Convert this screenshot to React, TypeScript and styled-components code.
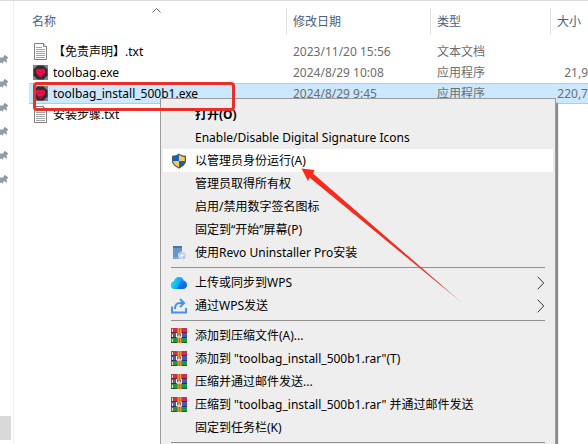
import React from "react";
import styled, { createGlobalStyle } from "styled-components";

const GlobalStyle = createGlobalStyle`
  *, *::before, *::after { box-sizing: border-box; }
  body { margin: 0; background: #fff; overflow: hidden; }
  body, button { font-family: "Noto Sans", "Noto Sans CJK SC", sans-serif; font-size: 12px; }
`;

const Explorer = styled.div`
  position: relative;
  display: flex;
  height: 100vh;
  border-top: 1px solid #d9d9d9;
  overflow: hidden;
  line-height: 20px;
`;

const Sidebar = styled.nav`
  display: flex;
  flex-direction: column;
  flex: none;
  width: 14px;
  padding: 46px 2px 4px 0;
  border-right: 1px solid #f0f0f0;
`;

const PinnedItem = styled.div`
  display: flex;
  align-items: center;
  height: 24px;
`;

const CurrentItem = styled.div`
  height: 24px;
  margin-top: auto;
  background: #d9d9d9;
`;

const FilePane = styled.main`
  flex: 1;
  min-width: 0;
  padding: 7px 0 0 15px;
`;

const FileTable = styled.table`
  width: 100%;
  table-layout: fixed;
  border-collapse: separate;
  border-spacing: 0;
`;

const HeaderCell = styled.th<{ $width?: number; $first?: boolean }>`
  position: relative;
  width: ${(p) => (p.$width ? `${p.$width}px` : "auto")};
  height: 27px;
  padding: 0 0 0 ${(p) => (p.$first ? 3 : 6)}px;
  border-left: ${(p) => (p.$first ? "0" : "1px solid #e2e2e2")};
  text-align: left;
  white-space: nowrap;
`;

const SortButton = styled.button`
  display: block;
  padding: 0;
  border: 0;
  background: none;
  color: #4c607a;
  line-height: 26px;
`;

const SortMark = styled.svg`
  position: absolute;
  top: 0;
  left: 50%;
  width: 9px;
  height: 5px;
  transform: translateX(-6px);
`;

const FileBody = styled.tbody`
  &::before { content: ""; display: block; height: 6px; }
`;

const FileRow = styled.tr<{ $selected?: boolean }>`
  td {
    background: ${(p) => (p.$selected ? "#cce8ff" : "transparent")};
    box-shadow: ${(p) => (p.$selected ? "inset 0 1px #99d1ff, inset 0 -1px #99d1ff" : "none")};
  }
`;

const Cell = styled.td<{ $right?: boolean }>`
  height: 21px;
  padding: 0 0 0 ${(p) => (p.$right ? 0 : 7)}px;
  color: #6d6d6d;
  text-align: ${(p) => (p.$right ? "right" : "left")};
  white-space: nowrap;
`;

const NameCell = styled(Cell)`
  padding-left: 3px;
  color: #000;
`;

const FileName = styled.span`
  display: flex;
  align-items: center;
  gap: 4px;
  svg { flex: none; }
`;

const Menu = styled.ul`
  position: absolute;
  top: 97px;
  left: 160px;
  width: 396px;
  margin: 0;
  padding: 4px 2px;
  list-style: none;
  background: #eee;
  border: 1px solid #9b9b9b;
  box-shadow: 2px 5px 1px #8c8c8c;
`;

const MenuButton = styled.button<{ $active?: boolean; $strong?: boolean }>`
  display: grid;
  grid-template-columns: 16px 1fr 8px;
  column-gap: 8px;
  align-items: center;
  width: 100%;
  height: 23px;
  padding: 0 8px;
  border: 0;
  background: ${(p) => (p.$active ? "#fff" : "transparent")};
  color: #000;
  font-weight: ${(p) => (p.$strong ? 700 : 400)};
  line-height: 20px;
  text-align: left;
  white-space: nowrap;
`;

const MenuIcon = styled.span`
  display: flex;
`;

const Separator = styled.li`
  height: 7px;
  padding: 3px 8px;
  &::before { content: ""; display: block; height: 1px; background: #919191; }
`;

const Highlight = styled.div`
  position: absolute;
  top: 81px;
  left: 33px;
  width: 202px;
  height: 29px;
  border: 3px solid #e8302a;
  border-radius: 4px;
`;

const Arrow = styled.svg`
  position: absolute;
  top: 165px;
  left: 300px;
  width: 166px;
  height: 140px;
`;

const PinIcon = () => (
  <svg width="9" height="11" viewBox="0 0 9 11" aria-hidden="true">
    <path d="M0 3.5h3L4.5 1.2 8 3.8 6.4 6l1 2.5-1.7-.2-1.8-1.2L2.5 10 2 8.5 0 9z" fill="#929ea6" />
    <path d="M4.5 1.2 8 3.8" stroke="#8a969e" />
  </svg>
);

const TextIcon = () => (
  <svg width="17" height="17" viewBox="0 0 17 17" aria-hidden="true">
    <path d="M2.5.5h9l3 3v13h-12z" fill="#fff" stroke="#7f7f7f" />
    <path d="M11.5.5v3h3" fill="#eee" stroke="#7f7f7f" />
    <path d="M4 4.5h6M4 6.5h9M4 8.5h9M4 10.5h9M4 12.5h9M4 14.5h9" stroke="#a3a3a3" />
  </svg>
);

const ToolbagIcon = () => (
  <svg width="17" height="17" viewBox="0 0 17 17" aria-hidden="true">
    <path d="M1 1h15v15H1z" fill="#858585" />
    <path d="M5.5 1.5h6l4 4v6l-4 4h-6l-4-4v-6z" fill="#332d31" />
    <path d="M8.5 13.5 6.3 11.5 4 8.5V6L6 4.5l1.5.7h2l1.500-.7L13 6v2.5l-2.300 3z" fill="#f20d4d" />
    <path d="m5.5 7 2 1v1.5zM11.5 7l-2 1v1.5zM7.5 11h2v1h-2z" fill="#7d1431" />
  </svg>
);

const ShieldIcon = () => (
  <svg width="16" height="16" viewBox="0 0 16 16" aria-hidden="true">
    <path d="M8 .5C6 2 3.8 2.7 1 2.8V8c0 3.600 4 6.200 7 7.700 3-1.500 7-4.100 7-7.700V2.800C12.200 2.700 10 2 8 .5z" fill="#50565b" />
    <path d="M8 1.700V8H2.200V3.900C4.500 3.700 6.500 2.800 8 1.700z" fill="#0e65bd" />
    <path d="M8 1.700V8h5.800V3.900C11.500 3.700 9.500 2.800 8 1.700z" fill="#ffc84a" />
    <path d="M8 8v6.300C5 12.800 2.200 10.900 2.200 8z" fill="#ffc84a" />
    <path d="M8 8v6.300c3-1.500 5.800-3.400 5.800-6.300z" fill="#0e65bd" />
  </svg>
);

const RevoIcon = () => (
  <svg width="16" height="16" viewBox="0 0 16 16" aria-hidden="true">
    <path d="M2 1h9v13H2z" fill="#6b95c9" />
    <path d="M2 1h9v2H2z" fill="#4576ad" />
    <path d="M2 12h6v2H2z" fill="#82a6d2" />
    <circle cx="11" cy="10.5" r="4" fill="#c9d8ea" />
    <path d="M11 10.5 8 8l2-1.300zM11 10.5l3.500 1.800-1.700 1.700z" fill="#a6bede" />
    <circle cx="11" cy="10.5" r="1.2" fill="#fff" />
  </svg>
);

const CloudIcon = () => (
  <svg width="16" height="16" viewBox="0 0 16 16" aria-hidden="true">
    <defs>
      <linearGradient id="cloudLeft" x1="0" y1="0.3" x2="1" y2="0.7">
        <stop offset="0" stopColor="#20e4f0" />
        <stop offset="1" stopColor="#0a86f2" />
      </linearGradient>
      <linearGradient id="cloudRight" x1="0" y1="0" x2="1" y2="1">
        <stop offset="0" stopColor="#18b4fa" />
        <stop offset="1" stopColor="#1257d9" />
      </linearGradient>
    </defs>
    <path d="M4 14c-2.400 0-4-1.500-4-3.800C0 8 1.400 6.500 3.300 6.300 3.700 3.800 5.500 2 8 2c2.300 0 4 1.400 4.500 3.500C14.600 5.900 16 7.500 16 9.700 16 12.300 14.400 14 12 14z" fill="url(#cloudRight)" />
    <path d="M4 14c-2.400 0-4-1.500-4-3.800C0 8 1.400 6.500 3.300 6.300 3.700 3.800 5.500 2 8 2c2.300 0 4 1.400 4.500 3.500-3 0-3.800 2-4.500 4.200C7.300 12.300 6.500 14 4 14z" fill="url(#cloudLeft)" />
  </svg>
);

const ShareIcon = () => (
  <svg width="16" height="16" viewBox="0 0 16 16" fill="none" stroke="#4a90e8" strokeWidth="2" aria-hidden="true">
    <path d="M1 8.500v6h14V10" />
    <path d="M4 11c0-4 1.500-6 5-6h3" />
    <path d="m9 1 4 4-4 4" />
  </svg>
);

const RarIcon = () => (
  <svg width="16" height="16" viewBox="0 0 16 16" aria-hidden="true">
    <path d="M0 0h16v5H0z" fill="#c8304f" />
    <path d="M0 5h16v5H0z" fill="#4657b8" />
    <path d="M0 10h16v5H0z" fill="#1c9a3f" />
    <path d="M0 4h16v1H0z" fill="#791733" />
    <path d="M0 9h16v1H0z" fill="#252d74" />
    <path d="M0 14h16v1H0z" fill="#105b27" />
    <path d="M1 1h1v3H1zM1 6h1v3H1zM1 11h1v3H1z" fill="#e9da9f" />
    <path d="M6 0h5v15H6z" fill="#d9601c" />
    <path d="M7 0h1v15H7zM9 0h1v15H9z" fill="#ef903c" />
    <path d="M5 6h6v3H5z" fill="#a85a48" />
    <path d="M5.500 5v4h5V5M8 6.500V9" fill="none" stroke="#fff" />
  </svg>
);

const Chevron = () => (
  <svg width="8" height="14" viewBox="0 0 8 14" aria-hidden="true">
    <path d="m.7.7 6 6.300-6 6.300" fill="none" stroke="#32324a" />
  </svg>
);

type MenuEntry = {
  text: string;
  icon?: React.ReactNode;
  active?: boolean;
  strong?: boolean;
  submenu?: boolean;
};

const menuGroups: MenuEntry[][] = [
  [
    { text: "打开(O)", strong: true },
    { text: "Enable/Disable Digital Signature Icons" },
    { text: "以管理员身份运行(A)", icon: <ShieldIcon />, active: true },
    { text: "管理员取得所有权" },
    { text: "启用/禁用数字签名图标" },
    { text: "固定到“开始”屏幕(P)" },
    { text: "使用Revo Uninstaller Pro安装", icon: <RevoIcon /> },
  ],
  [
    { text: "上传或同步到WPS", icon: <CloudIcon />, submenu: true },
    { text: "通过WPS发送", icon: <ShareIcon />, submenu: true },
  ],
  [
    { text: "添加到压缩文件(A)...", icon: <RarIcon /> },
    { text: '添加到 "toolbag_install_500b1.rar"(T)', icon: <RarIcon /> },
    { text: "压缩并通过邮件发送...", icon: <RarIcon /> },
    { text: '压缩到 "toolbag_install_500b1.rar" 并通过邮件发送', icon: <RarIcon /> },
    { text: "固定到任务栏(K)" },
  ],
  [],
];

const files = [
  { name: "【免责声明】.txt", date: "2023/11/20 15:56", type: "文本文档", size: "", icon: <TextIcon /> },
  { name: "toolbag.exe", date: "2024/8/29 10:08", type: "应用程序", size: "21,9", icon: <ToolbagIcon /> },
  { name: "toolbag_install_500b1.exe", date: "2024/8/29 9:45", type: "应用程序", size: "220,7", icon: <ToolbagIcon />, selected: true },
  { name: "安装步骤.txt", date: "", type: "", size: "", icon: <TextIcon /> },
];

export default function App() {
  return (
    <>
      <GlobalStyle />
      <Explorer>
        <Sidebar>
          {[0, 1, 2, 3, 4, 5].map((n) => (
            <PinnedItem key={n}><PinIcon /></PinnedItem>
          ))}
          <CurrentItem />
        </Sidebar>
        <FilePane>
          <FileTable>
            <thead>
              <tr>
                <HeaderCell $width={257} $first>
                  <SortButton>名称</SortButton>
                  <SortMark viewBox="0 0 9 5" aria-hidden="true">
                    <path d="m.5 4.500 4-4 4 4" fill="none" stroke="#666" />
                  </SortMark>
                </HeaderCell>
                <HeaderCell $width={144}><SortButton>修改日期</SortButton></HeaderCell>
                <HeaderCell $width={120}><SortButton>类型</SortButton></HeaderCell>
                <HeaderCell><SortButton>大小</SortButton></HeaderCell>
              </tr>
            </thead>
            <FileBody>
              {files.map((f) => (
                <FileRow key={f.name} $selected={f.selected}>
                  <NameCell>
                    <FileName>{f.icon}{f.name}</FileName>
                  </NameCell>
                  <Cell>{f.date}</Cell>
                  <Cell>{f.type}</Cell>
                  <Cell $right>{f.size}</Cell>
                </FileRow>
              ))}
            </FileBody>
          </FileTable>
        </FilePane>
        <Menu>
          {menuGroups.map((group, g) => (
            <React.Fragment key={g}>
              {g > 0 && <Separator role="separator" />}
              {group.map((item) => (
                <li key={item.text}>
                  <MenuButton $active={item.active} $strong={item.strong}>
                    <MenuIcon>{item.icon}</MenuIcon>
                    <span>{item.text}</span>
                    {item.submenu && <Chevron />}
                  </MenuButton>
                </li>
              ))}
            </React.Fragment>
          ))}
        </Menu>
        <Highlight />
        <Arrow viewBox="0 0 166 140" aria-hidden="true">
          <defs>
            <linearGradient id="arrowTail" x1="0" y1="0" x2="1" y2="1">
              <stop offset="0" stopColor="#fa2819" />
              <stop offset="0.85" stopColor="#e0352b" />
              <stop offset="1" stopColor="#e0352b" stopOpacity="0.3" />
            </linearGradient>
          </defs>
          <path d="M1.500 2.500 14.500 4 13 7.500 164 138.500 9.500 11.500 8 15z" fill="url(#arrowTail)" />
        </Arrow>
      </Explorer>
    </>
  );
}
